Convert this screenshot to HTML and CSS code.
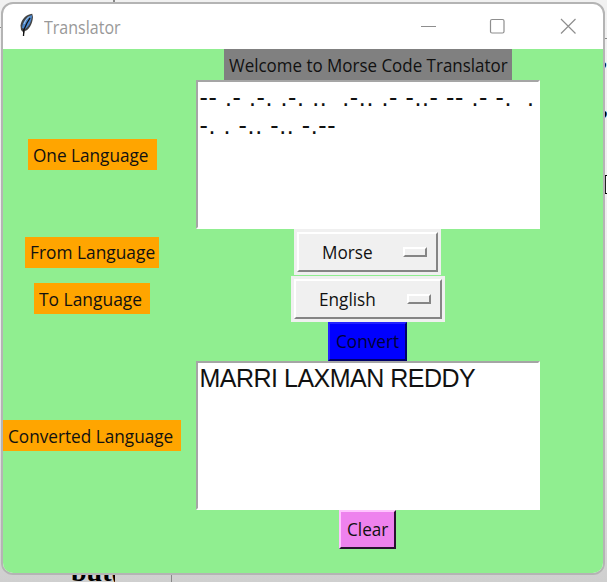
FILE: index.html
```html
<!DOCTYPE html>
<html lang="en">
<head>
<meta charset="utf-8">
<title>Translator</title>
<link rel="stylesheet" href="styles.css">
</head>
<body>
<div class="desktop">
  <i class="rule rule-top"></i><i class="rule rule-left"></i><i class="rule rule-right"></i><i class="rule rule-bottom"></i>
  <span class="behind behind-comma">,</span>
  <span class="behind behind-quote">,</span>
  <i class="behind-box"></i>
  <span class="behind behind-word">but(</span>
</div>
<main class="window">
  <header class="titlebar">
    <svg class="feather" width="16" height="24" viewBox="0 0 16 24">
      <path d="M13.2 .7C7 1.500 2.500 6 1.500 12.500L2 17 4 19 4.500 23 5.800 18C10 17 13.500 11 14 4Z" fill="#444"/>
      <path d="M12.500 2C7.500 4 3.500 9 3 15L6 16C10 14 12.500 8 13 3Z" fill="#4b87cc"/>
      <path d="M11 5L8 10 4.800 17 4.500 23" fill="none" stroke="#111" stroke-width="1.300"/>
      <path d="M10 3.500Q6 7 5 11" fill="none" stroke="#a9caec" stroke-width="1"/>
    </svg>
    <h1 class="title"><span>Translator</span></h1>
    <svg class="controls" width="160" height="18" viewBox="0 0 160 18" fill="none" stroke="#8e8e8e" stroke-width="1.200">
      <path d="M1 8.500H16"/>
      <rect x="70.500" y="1.500" width="13.500" height="13.500" rx="1.500"/>
      <path d="M141 1L155.500 15.500M155.500 1L141 15.500"/>
    </svg>
  </header>
  <div class="form">
    <div class="label heading"><span>Welcome to Morse Code Translator</span></div>
    <div class="label one"><span>One Language</span></div>
    <div class="text morse"><p>-- .- .-. .-. ..  .-.. .- -..- -- .- -.  .</p><p>-. . -.. -.. -.--</p></div>
    <div class="label from"><span>From Language</span></div>
    <div class="menu menu-from"><div class="menu-face"><span>Morse</span><i class="indicator"></i></div></div>
    <div class="label to"><span>To Language</span></div>
    <div class="menu menu-to"><div class="menu-face"><span>English</span><i class="indicator"></i></div></div>
    <div class="button convert"><span>Convert</span></div>
    <div class="label converted"><span>Converted Language</span></div>
    <div class="text output"><p>MARRI LAXMAN REDDY</p></div>
    <div class="button clear"><span>Clear</span></div>
  </div>
</main>
</body>
</html>
```

FILE: styles.css
```css
* { box-sizing: border-box; }
body {
  margin: 0;
  width: 607px;
  height: 582px;
  overflow: hidden;
  position: relative;
  font: 18px/24px "Open Sans", "Noto Sans", sans-serif;
  color: #111;
}
.desktop {
  position: absolute;
  inset: 0;
  background: linear-gradient(#f1f1f1, #ededed 60%, #cfcfcf);
}
.rule { position: absolute; background: #888; }
.rule-top { left: 113px; top: 0; width: 2px; height: 4px; }
.rule-left { left: 0; top: 27px; width: 3px; height: 1px; }
.rule-right { left: 603px; top: 38px; width: 4px; height: 1px; }
.rule-bottom { left: 171px; top: 574px; width: 1px; height: 8px; }
.behind { position: absolute; font: bold 28px/30px "Liberation Serif", serif; color: #000; }
.behind-comma { left: 600px; top: 42px; }
.behind-quote { left: 602px; top: 91px; font-style: italic; }
.behind-box { position: absolute; left: 600px; top: 175px; width: 12px; height: 19px; border: 1px solid #000; border-left: 6px solid #222; background: #fff; }
.behind-word { left: 71px; top: 557px; width: 44px; overflow: hidden; }
.window {
  position: relative;
  margin: 2px 0 0 1px;
  width: 604px;
  height: 573px;
  border: 2px solid #b4b4b4;
  border-radius: 12px;
  background: #fff;
  overflow: hidden;
}
.titlebar { height: 45px; display: flex; align-items: center; padding-left: 16px; }
.feather { flex: none; margin-bottom: 4px; }
.title { margin: 0 0 0 9px; font-size: 18px; font-weight: 400; color: #999; width: 77px; }
.controls { margin-left: 299px; margin-top: 1px; flex: none; }
span { white-space: nowrap; }
.form {
  height: 524px;
  background: #90ee90;
  display: grid;
  grid-template-columns: 178px 373px;
  grid-template-rows: 31px 149px 46px 47px 39px 149px 39px;
  justify-items: center;
  align-items: center;
}
.label { height: 31px; display: flex; align-items: center; background: #ffa500; padding-left: 5px; font-size: 18px; }
.label span, .title span, .menu span, .button span { display: inline-block; transform-origin: 0 50%; transform: scaleX(.955); }
.title span { transform: scaleX(.89); }
.label.heading span { transform: scaleX(.942); }
.heading { grid-column: 2; width: 288px; background: #808080; }
.one { width: 129px; }
.from { width: 134px; }
.to { width: 116px; }
.label.to span { transform: scaleX(.967); }
.label.from span { transform: scaleX(.963); }
.converted { width: 178px; grid-row: 6; }
.text {
  width: 344px;
  height: 149px;
  padding: 2px 1px 2px 2px;
  background: #fff;
  border: 2px solid;
  border-color: #a5a5a5 #fff #fff #a5a5a5;
  font: 25px/28px "Liberation Sans", Arial, sans-serif;
}
.text p { margin: 0; white-space: pre; }
.morse { letter-spacing: .65px; word-spacing: -.15px; padding-top: 1px; }
.output { letter-spacing: -.5px; grid-column: 2; grid-row: 6; padding-top: 1px; }
.menu { background: #f0f0f0; padding: 3px; height: 46px; }
.menu-face {
  height: 40px;
  display: flex;
  align-items: center;
  border: 2px solid;
  border-color: #fff #858585 #858585 #fff;
  padding-left: 23px;
}
.menu-from { width: 147px; }
.menu-to { width: 154px; }
.indicator {
  margin-left: auto;
  margin-right: 9px;
  width: 24px;
  height: 10px;
  border: 2px solid;
  border-color: #fff #858585 #858585 #fff;
}
.button { height: 39px; display: flex; align-items: center; border: 2px solid; padding: 0 0 2px 6px; grid-column: 2; }
.convert { width: 79px; background: #00f; border-color: #22f #00006a #00006a #22f; color: #000038; }
.clear { width: 57px; background: #ee82ee; border-color: #ffc4ff #2a1030 #2a1030 #ffc4ff; grid-row: 7; }
```
